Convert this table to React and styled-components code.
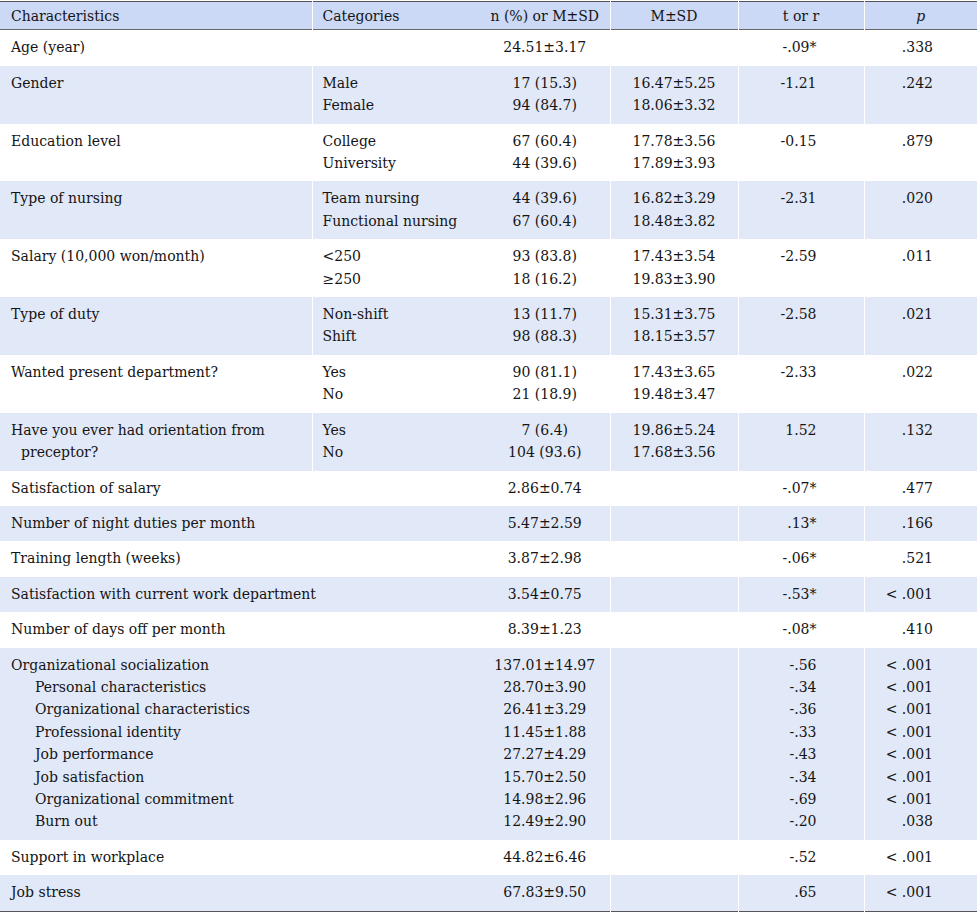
import React from 'react';
import styled, { createGlobalStyle } from 'styled-components';

const GlobalStyle = createGlobalStyle`
  html, body { margin: 0; padding: 0; background: #fff; }
  body { font-family: "DejaVu Serif", "Liberation Serif", serif; color: #151515; }
`;

const columns = [
    { width: 312, align: 'left', padL: 11, padR: 4 },
    { width: 168, align: 'left', padL: 10, padR: 4 },
    { width: 130, align: 'center', padL: 0, padR: 0, noDivider: true },
    { width: 128, align: 'center', padL: 0, padR: 0 },
    { width: 126, align: 'right', padL: 0, padR: 47 },
    { width: 113, align: 'right', padL: 0, padR: 44 },
];

const rows = [
    { label: ['Age (year)'], n: ['24.51±3.17'], t: ['-.09*'], p: ['.338'] },
    { label: ['Gender'], cats: ['Male', 'Female'], n: ['17 (15.3)', '94 (84.7)'], m: ['16.47±5.25', '18.06±3.32'], t: ['-1.21'], p: ['.242'] },
    { label: ['Education level'], cats: ['College', 'University'], n: ['67 (60.4)', '44 (39.6)'], m: ['17.78±3.56', '17.89±3.93'], t: ['-0.15'], p: ['.879'] },
    { label: ['Type of nursing'], cats: ['Team nursing', 'Functional nursing'], n: ['44 (39.6)', '67 (60.4)'], m: ['16.82±3.29', '18.48±3.82'], t: ['-2.31'], p: ['.020'] },
    { label: ['Salary (10,000 won/month)'], cats: ['<250', '≥250'], n: ['93 (83.8)', '18 (16.2)'], m: ['17.43±3.54', '19.83±3.90'], t: ['-2.59'], p: ['.011'] },
    { label: ['Type of duty'], cats: ['Non-shift', 'Shift'], n: ['13 (11.7)', '98 (88.3)'], m: ['15.31±3.75', '18.15±3.57'], t: ['-2.58'], p: ['.021'] },
    { label: ['Wanted present department?'], cats: ['Yes', 'No'], n: ['90 (81.1)', '21 (18.9)'], m: ['17.43±3.65', '19.48±3.47'], t: ['-2.33'], p: ['.022'] },
    { label: ['Have you ever had orientation from', { text: 'preceptor?', indent: 10 }], cats: ['Yes', 'No'], n: ['7 (6.4)', '104 (93.6)'], m: ['19.86±5.24', '17.68±3.56'], t: ['1.52'], p: ['.132'] },
    { label: ['Satisfaction of salary'], n: ['2.86±0.74'], t: ['-.07*'], p: ['.477'] },
    { label: ['Number of night duties per month'], n: ['5.47±2.59'], t: ['.13*'], p: ['.166'] },
    { label: ['Training length (weeks)'], n: ['3.87±2.98'], t: ['-.06*'], p: ['.521'] },
    { label: ['Satisfaction with current work department'], n: ['3.54±0.75'], t: ['-.53*'], p: ['< .001'] },
    { label: ['Number of days off per month'], n: ['8.39±1.23'], t: ['-.08*'], p: ['.410'] },
    {
        label: [
            'Organizational socialization',
            { text: 'Personal characteristics', indent: 24 },
            { text: 'Organizational characteristics', indent: 24 },
            { text: 'Professional identity', indent: 24 },
            { text: 'Job performance', indent: 24 },
            { text: 'Job satisfaction', indent: 24 },
            { text: 'Organizational commitment', indent: 24 },
            { text: 'Burn out', indent: 24 },
        ],
        n: ['137.01±14.97', '28.70±3.90', '26.41±3.29', '11.45±1.88', '27.27±4.29', '15.70±2.50', '14.98±2.96', '12.49±2.90'],
        t: ['-.56', '-.34', '-.36', '-.33', '-.43', '-.34', '-.69', '-.20'],
        p: ['< .001', '< .001', '< .001', '< .001', '< .001', '< .001', '< .001', '.038'],
    },
    { label: ['Support in workplace'], n: ['44.82±6.46'], t: ['-.52'], p: ['< .001'] },
    { label: ['Job stress'], n: ['67.83±9.50'], t: ['.65'], p: ['< .001'] },
];

const Page = styled.div`
    padding-top: 1px;
    width: 977px;
`;

const Table = styled.table`
    width: 977px;
    border-collapse: collapse;
    table-layout: fixed;
    font-size: 14px;
    line-height: 22.4px;
    border-top: 1px solid #555;
    border-bottom: 1px solid #555;
`;

const HeadRow = styled.tr`
    background: #cbd8f6;
    border-bottom: 1px solid #666;
`;

const BodyRow = styled.tr`
    background: ${p => (p.$shade ? '#e1e8f8' : '#fff')};
`;

const Th = styled.th`
    font-weight: normal;
    text-align: ${p => p.$align};
    padding: 3px 0 2px ${p => p.$padL}px;
    border-left: ${p => (p.$divider ? '1px solid #fff' : 'none')};
    font-style: ${p => (p.$italic ? 'italic' : 'normal')};
    white-space: nowrap;
`;

const Td = styled.td`
    vertical-align: top;
    text-align: ${p => p.$align};
    padding: 6px ${p => p.$padR}px 7px ${p => p.$padL}px;
    border-left: ${p => (p.$divider ? '1px solid #fff' : 'none')};
    white-space: nowrap;
    overflow: visible;
`;

const Line = styled.div`
    padding-left: ${p => p.$indent || 0}px;
`;

const Note = styled.p`
    margin: 10px 0 0;
    padding-left: 11px;
    font-size: 13px;
    line-height: 20px;
`;

const Lines = ({ items = [] }) =>
    items.map((item, i) => {
        const text = typeof item === 'string' ? item : item.text;
        const indent = typeof item === 'string' ? 0 : item.indent;
        return <Line key={i} $indent={indent}>{text}</Line>;
    });

const Cell = ({ col, items, span }) => {
    const c = columns[col];
    return (
        <Td colSpan={span} $align={c.align} $padL={c.padL} $padR={c.padR} $divider={col > 0 && !c.noDivider}>
            <Lines items={items} />
        </Td>
    );
};

const headers = ['Characteristics', 'Categories', 'n (%) or M±SD', 'M±SD', 't or r', 'p'];

const App = () => {
    return (
        <Page>
            <GlobalStyle />
            <Table>
                <colgroup>
                    {columns.map((c, i) => <col key={i} style={{ width: c.width }} />)}
                </colgroup>
                <thead>
                    <HeadRow>
                        {headers.map((h, i) => (
                            <Th
                                key={h}
                                $align={i < 2 ? 'left' : 'center'}
                                $padL={i < 2 ? columns[i].padL : 0}
                                $divider={i > 0 && !columns[i].noDivider}
                                $italic={h === 'p'}
                            >
                                {h}
                            </Th>
                        ))}
                    </HeadRow>
                </thead>
                <tbody>
                    {rows.map((r, i) => (
                        <BodyRow key={i} $shade={i % 2 === 1}>
                            {r.cats ? (
                                <>
                                    <Cell col={0} items={r.label} />
                                    <Cell col={1} items={r.cats} />
                                </>
                            ) : (
                                <Cell col={0} items={r.label} span={2} />
                            )}
                            <Cell col={2} items={r.n} />
                            <Cell col={3} items={r.m} />
                            <Cell col={4} items={r.t} />
                            <Cell col={5} items={r.p} />
                        </BodyRow>
                    ))}
                </tbody>
            </Table>
            <Note>M=mean; SD=standard deviation; *Pearson's correlation coefficient.</Note>
        </Page>
    );
};

export default App;
